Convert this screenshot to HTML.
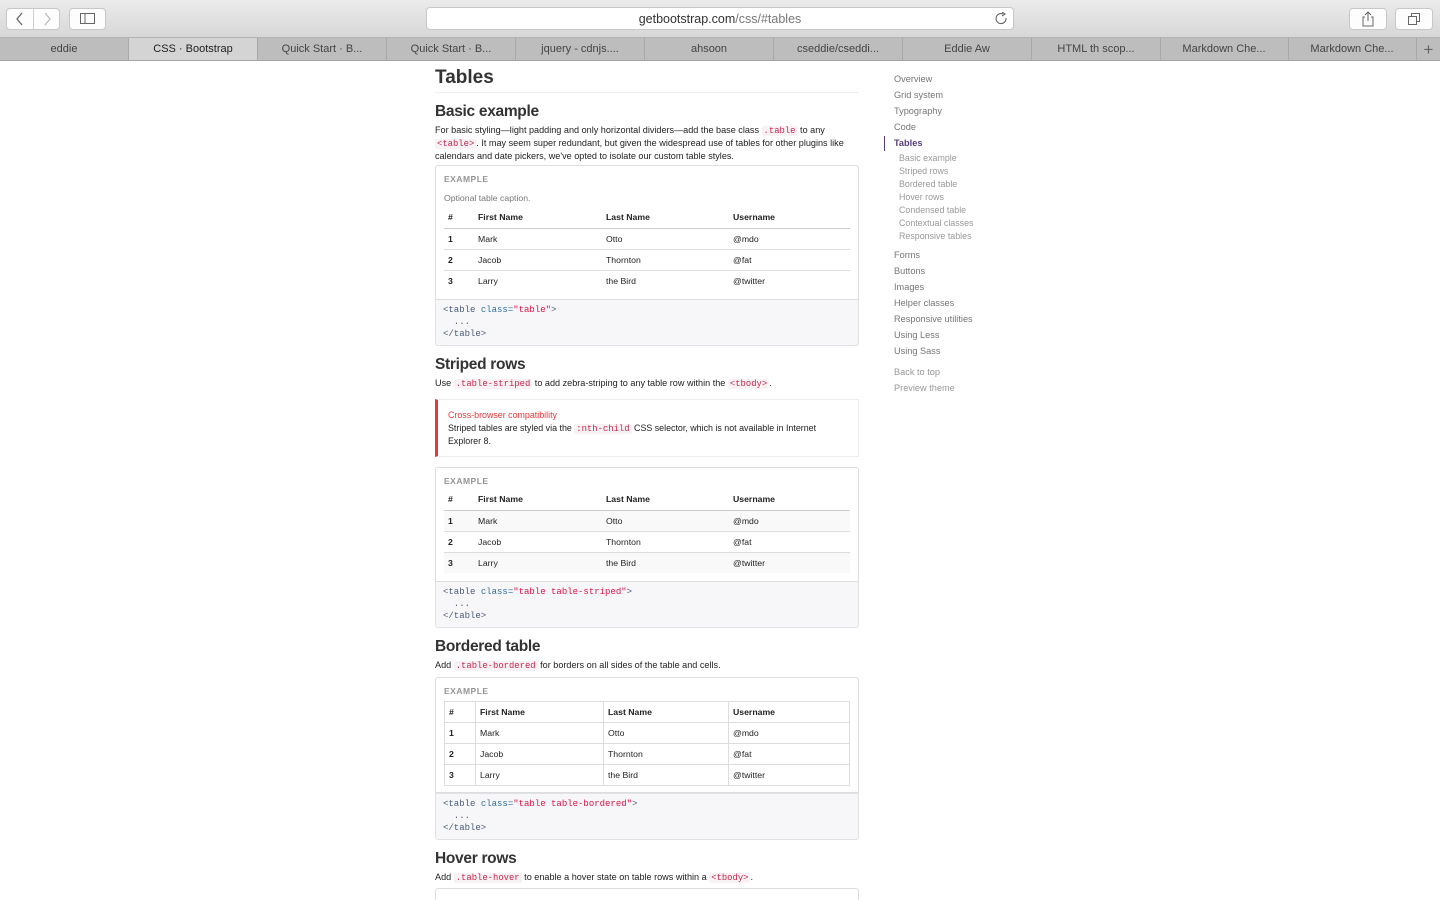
<!DOCTYPE html>
<html><head><meta charset="utf-8"><style>
*{margin:0;padding:0;box-sizing:border-box}
html,body{width:1440px;height:900px;overflow:hidden}
body{background:#fff;font-family:"Liberation Sans",sans-serif;color:#333;position:relative}
.a{position:absolute}
.tb{left:0;top:0;width:1440px;height:38px;background:linear-gradient(#ebebeb,#d7d7d7);border-bottom:1px solid #b3b3b3}
.btn{position:absolute;height:22px;background:#fdfdfd;border:1px solid #c8c8c8;border-radius:4px}
.tabs{left:0;top:38px;width:1440px;height:23px;background:#bdbdbd;border-bottom:1px solid #a5a5a5}
.tab{position:absolute;top:0;height:22px;width:129px;border-right:1px solid #a8a8a8;font-size:11px;color:#444;text-align:center;line-height:23px}
h1{position:absolute;left:435px;font-size:19px;font-weight:bold;color:#333}
h2{position:absolute;left:435px;font-size:15.5px;font-weight:bold;color:#333;letter-spacing:-.3px}
p.t{position:absolute;left:435px;width:424px;font-size:9.1px;line-height:12px;color:#222}
code{font-family:"Liberation Mono",monospace;font-size:8.9px;color:#c7254e;background:#f9f2f4;padding:0 2px;border-radius:2px}
.ex{position:absolute;left:435px;width:424px;border:1px solid #ddd;border-radius:3px 3px 0 0;background:#fff}
.lab{position:absolute;left:8px;font-size:8.5px;font-weight:bold;color:#959595;letter-spacing:.5px}
.hl{position:absolute;left:435px;width:424px;background:#f7f7f9;border:1px solid #e1e1e8;border-top:none;font-family:"Liberation Mono",monospace;font-size:9px;line-height:12px;color:#4a5a7a;padding:4px 7px;border-radius:0 0 3px 3px}
.hl .k{color:#2f6f9f}.hl .s{color:#d14}
table{position:absolute;left:8px;width:406px;border-collapse:collapse;font-size:8.7px;color:#222}
td,th{height:21px;text-align:left;padding:0 4px;vertical-align:middle}
th{font-weight:bold;border-bottom:1px solid #ccc}
td{border-top:1px solid #ddd}
td:first-child{font-weight:bold}
.st tr.o td{background:#f9f9f9}
.bd td,.bd th{border:1px solid #ddd}
.nav{position:absolute;left:894px;font-size:9.2px;color:#767676}
.sub{position:absolute;left:899px;font-size:8.9px;color:#999}
</style></head><body>
<div class="a tb"></div>
<div class="btn" style="left:6px;top:8px;width:54px"></div>
<div class="a" style="left:33px;top:9px;width:1px;height:20px;background:#d0d0d0"></div>
<svg class="a" style="left:13px;top:12px" width="14" height="14"><path d="M9 1 L4 7 L9 13" stroke="#666" fill="none" stroke-width="1.3"/></svg>
<svg class="a" style="left:40px;top:12px" width="14" height="14"><path d="M5 1 L10 7 L5 13" stroke="#bbb" fill="none" stroke-width="1.3"/></svg>
<div class="btn" style="left:69px;top:8px;width:37px"></div>
<svg class="a" style="left:80px;top:13px" width="16" height="12"><rect x="0.5" y="0.5" width="14" height="10" fill="none" stroke="#666"/><line x1="5" y1="0" x2="5" y2="11" stroke="#666"/></svg>
<div class="btn" style="left:426px;top:7px;width:588px;height:23px;background:#fff"></div>
<div class="a" style="left:426px;top:12px;width:588px;text-align:center;font-size:12.5px;color:#333">getbootstrap.com<span style="color:#777">/css/#tables</span></div>
<svg class="a" style="left:995px;top:12px" width="14" height="14"><path d="M11 6 A5 5 0 1 1 8 2" stroke="#666" fill="none" stroke-width="1.1"/><path d="M7 0 L10 2 L7 4" stroke="#666" fill="none" stroke-width="1.1"/></svg>
<div class="btn" style="left:1349px;top:8px;width:38px"></div>
<svg class="a" style="left:1361px;top:11px" width="14" height="16"><path d="M4 6 H2 V15 H12 V6 H10 M7 1 V10 M4 4 L7 1 L10 4" stroke="#666" fill="none"/></svg>
<div class="btn" style="left:1395px;top:8px;width:38px"></div>
<svg class="a" style="left:1407px;top:12px" width="14" height="14"><rect x="1.5" y="4.5" width="8" height="8" fill="none" stroke="#666"/><path d="M4.5 4.5 V1.5 H12.5 V9.5 H9.5" fill="none" stroke="#666"/></svg>
<div class="a tabs">
<div class="tab" style="left:0">eddie</div>
<div class="tab" style="left:129px;background:#d4d4d4;color:#222">CSS · Bootstrap</div>
<div class="tab" style="left:258px">Quick Start · B...</div>
<div class="tab" style="left:387px">Quick Start · B...</div>
<div class="tab" style="left:516px">jquery - cdnjs....</div>
<div class="tab" style="left:645px">ahsoon</div>
<div class="tab" style="left:774px">cseddie/cseddi...</div>
<div class="tab" style="left:903px">Eddie Aw</div>
<div class="tab" style="left:1032px">HTML th scop...</div>
<div class="tab" style="left:1160px">Markdown Che...</div>
<div class="tab" style="left:1288px">Markdown Che...</div>
<div class="tab" style="left:1417px;width:23px;border:none;font-size:17px;color:#666">+</div>
</div>

<h1 style="top:67px">Tables</h1>
<div class="a" style="left:435px;top:92px;width:424px;height:1px;background:#eee"></div>

<h2 style="top:103px">Basic example</h2>
<p class="t" style="top:124px">For basic styling—light padding and only horizontal dividers—add the base class <code>.table</code> to any <code>&lt;table&gt;</code>. It may seem super redundant, but given the widespread use of tables for other plugins like calendars and date pickers, we've opted to isolate our custom table styles.</p>
<div class="ex" style="top:165px;height:135px">
<div class="lab" style="top:8px">EXAMPLE</div>
<div class="a" style="left:8px;top:27px;font-size:8.7px;color:#777">Optional table caption.</div>
<table style="top:41px"><tr><th style="width:30px">#</th><th style="width:128px">First Name</th><th style="width:127px">Last Name</th><th>Username</th></tr>
<tr><td>1</td><td>Mark</td><td>Otto</td><td>@mdo</td></tr>
<tr><td>2</td><td>Jacob</td><td>Thornton</td><td>@fat</td></tr>
<tr><td>3</td><td>Larry</td><td>the Bird</td><td>@twitter</td></tr></table>
</div>
<div class="hl" style="top:300px;height:46px">&lt;table <span class="k">class=</span><span class="s">"table"</span>&gt;<br>&nbsp;&nbsp;...<br>&lt;/table&gt;</div>

<h2 style="top:356px">Striped rows</h2>
<p class="t" style="top:377px">Use <code>.table-striped</code> to add zebra-striping to any table row within the <code>&lt;tbody&gt;</code>.</p>
<div class="a" style="left:435px;top:399px;width:424px;height:58px;border:1px solid #eee;border-left:3px solid #e5383b;padding:9px 10px;font-size:8.9px;line-height:12px;color:#222">
<div style="color:#e5383b;margin-bottom:1px">Cross-browser compatibility</div>Striped tables are styled via the <code>:nth-child</code> CSS selector, which is not available in Internet Explorer 8.</div>
<div class="ex" style="top:467px;height:115px">
<div class="lab" style="top:8px">EXAMPLE</div>
<table class="st" style="top:21px"><tr><th style="width:30px">#</th><th style="width:128px">First Name</th><th style="width:127px">Last Name</th><th>Username</th></tr>
<tr class="o"><td>1</td><td>Mark</td><td>Otto</td><td>@mdo</td></tr>
<tr><td>2</td><td>Jacob</td><td>Thornton</td><td>@fat</td></tr>
<tr class="o"><td>3</td><td>Larry</td><td>the Bird</td><td>@twitter</td></tr></table>
</div>
<div class="hl" style="top:582px;height:46px">&lt;table <span class="k">class=</span><span class="s">"table table-striped"</span>&gt;<br>&nbsp;&nbsp;...<br>&lt;/table&gt;</div>

<h2 style="top:638px">Bordered table</h2>
<p class="t" style="top:659px">Add <code>.table-bordered</code> for borders on all sides of the table and cells.</p>
<div class="ex" style="top:677px;height:116px">
<div class="lab" style="top:8px">EXAMPLE</div>
<table class="bd" style="top:23px"><tr><th style="width:31px">#</th><th style="width:128px">First Name</th><th style="width:125px">Last Name</th><th>Username</th></tr>
<tr><td>1</td><td>Mark</td><td>Otto</td><td>@mdo</td></tr>
<tr><td>2</td><td>Jacob</td><td>Thornton</td><td>@fat</td></tr>
<tr><td>3</td><td>Larry</td><td>the Bird</td><td>@twitter</td></tr></table>
</div>
<div class="hl" style="top:793px;height:47px;border-top:1px solid #e1e1e8">&lt;table <span class="k">class=</span><span class="s">"table table-bordered"</span>&gt;<br>&nbsp;&nbsp;...<br>&lt;/table&gt;</div>

<h2 style="top:850px">Hover rows</h2>
<p class="t" style="top:871px">Add <code>.table-hover</code> to enable a hover state on table rows within a <code>&lt;tbody&gt;</code>.</p>
<div class="ex" style="top:888px;height:30px"></div>

<div class="nav" style="top:74px">Overview</div>
<div class="nav" style="top:90px">Grid system</div>
<div class="nav" style="top:106px">Typography</div>
<div class="nav" style="top:122px">Code</div>
<div class="a" style="left:884px;top:136px;width:1px;height:15px;background:#563d7c"></div>
<div class="nav" style="top:138px;color:#563d7c;font-weight:bold">Tables</div>
<div class="sub" style="top:153px">Basic example</div>
<div class="sub" style="top:166px">Striped rows</div>
<div class="sub" style="top:179px">Bordered table</div>
<div class="sub" style="top:192px">Hover rows</div>
<div class="sub" style="top:205px">Condensed table</div>
<div class="sub" style="top:218px">Contextual classes</div>
<div class="sub" style="top:231px">Responsive tables</div>
<div class="nav" style="top:250px">Forms</div>
<div class="nav" style="top:266px">Buttons</div>
<div class="nav" style="top:282px">Images</div>
<div class="nav" style="top:298px">Helper classes</div>
<div class="nav" style="top:314px">Responsive utilities</div>
<div class="nav" style="top:330px">Using Less</div>
<div class="nav" style="top:346px">Using Sass</div>
<div class="nav" style="top:367px;color:#999">Back to top</div>
<div class="nav" style="top:383px;color:#999">Preview theme</div>
</body></html>
